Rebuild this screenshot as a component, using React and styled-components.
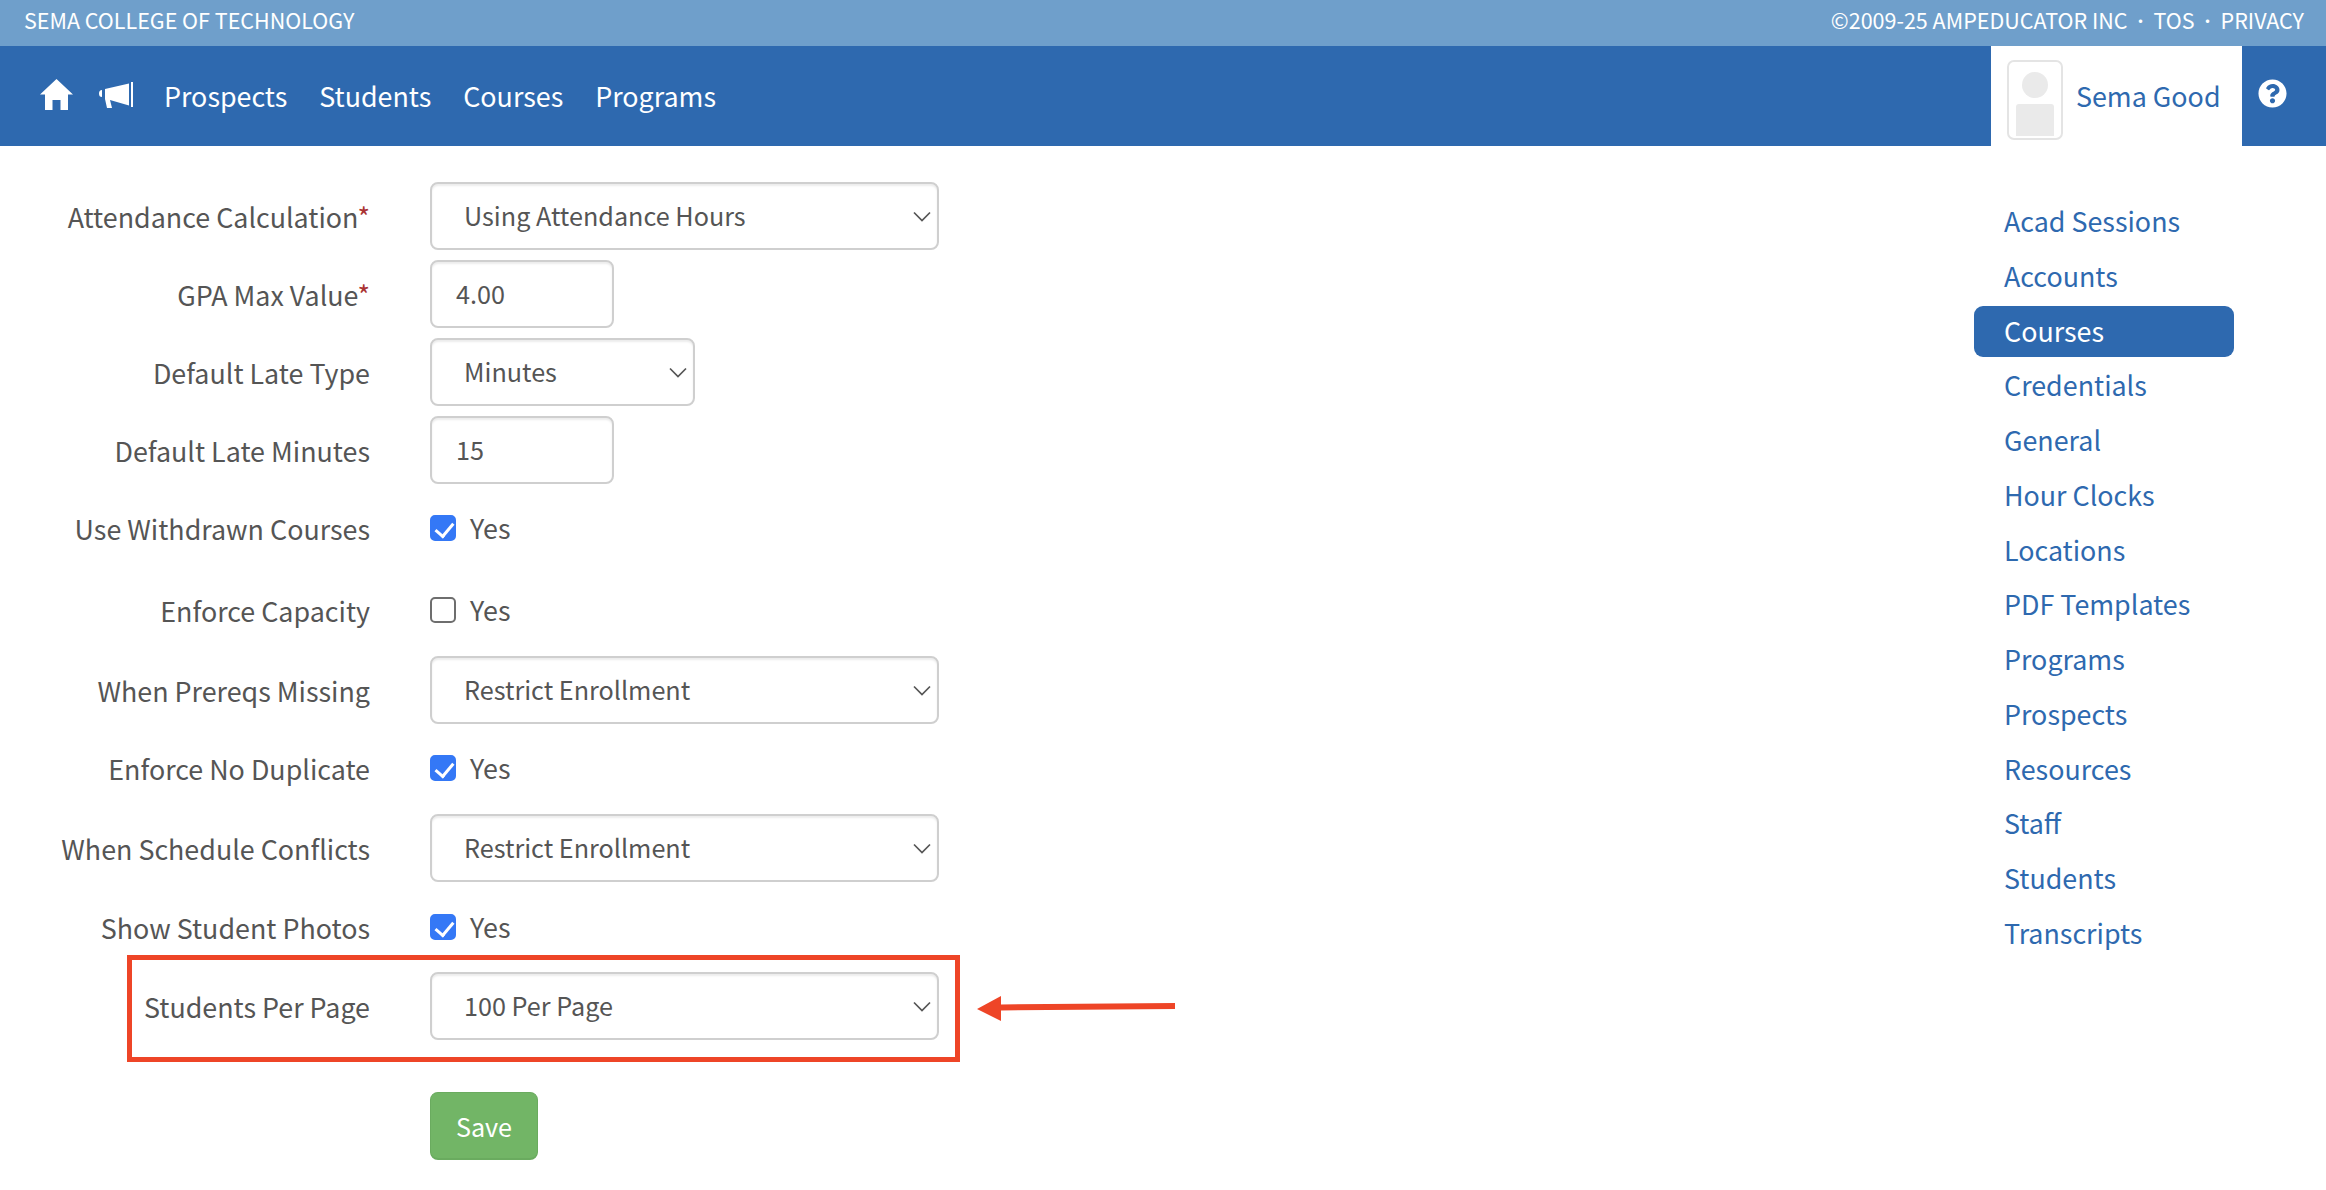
import React from "react";
import styled, { createGlobalStyle } from "styled-components";
import { FaQuestionCircle } from "react-icons/fa";

const SANS = `"Noto Sans CJK SC", "Open Sans", sans-serif`;

const Global = createGlobalStyle`
  html, body { margin: 0; padding: 0; background: #fff; }
  body { font-family: ${SANS}; color: #555; overflow: hidden; }
  * { box-sizing: border-box; }
`;

const Page = styled.div`
  position: relative;
  width: 2326px;
  height: 1190px;
  overflow: hidden;
`;

const TopBar = styled.header`
  height: 46px;
  background: #6f9fcb;
  color: #fff;
  font-size: 21.5px;
  line-height: 40px;
  padding: 0 22px 6px 24px;
  display: flex;
  justify-content: space-between;
`;

const TopRight = styled.div`
  display: flex;
  gap: 4px;
`;

const Dot = styled.span`
  font-size: 16px;
  padding: 0 1px;
`;

const NavBar = styled.nav`
  height: 100px;
  background: #2e69af;
  display: flex;
  align-items: center;
  color: #fff;
`;

const IconSvg = styled.svg`
  display: block;
  fill: #fff;
  margin-left: ${(p) => p.$ml}px;
  margin-top: -3px;
`;

const NavLinks = styled.div`
  display: flex;
  gap: 32px;
  margin-left: 31px;
  font-size: 26.85px;
  line-height: 40px;
`;

const Spacer = styled.div`
  flex: 1;
`;

const UserTab = styled.div`
  width: 251px;
  height: 100px;
  background: #fff;
  display: flex;
  align-items: center;
  padding-left: 16px;
  gap: 13px;
  color: #2e69af;
  font-size: 26.85px;
`;

const UserName = styled.span`
  padding-bottom: 2px;
`;

const Avatar = styled.div`
  width: 56px;
  height: 80px;
  border: 2px solid #e4e4e4;
  border-radius: 7px;
  display: flex;
  flex-direction: column;
  align-items: center;
  justify-content: flex-end;
  gap: 6px;
  padding: 0 6px 2px;
  margin-top: 8px;
`;

const AvatarHead = styled.div`
  width: 26px;
  height: 26px;
  border-radius: 50%;
  background: #eaeaea;
`;

const AvatarBody = styled.div`
  width: 38px;
  height: 32px;
  border-radius: 3px 3px 0 0;
  background: #eaeaea;
`;

const HelpSlot = styled.div`
  flex: 0 0 84px;
  display: flex;
  padding: 0 0 5px 16px;
  font-size: 29px;
`;

const Main = styled.main`
  display: flex;
  justify-content: space-between;
`;

const Form = styled.form`
  padding-top: 36px;
`;

const Row = styled.div`
  display: flex;
  align-items: center;
  height: ${(p) => p.$h}px;
  margin-top: ${(p) => p.$mt || 0}px;
`;

const Label = styled.label`
  width: 370px;
  padding-top: 1px;
  text-align: right;
  font-size: 26.85px;
  line-height: 40px;
  color: #555;
`;

const Req = styled.span`
  color: #a33;
`;

const Field = styled.div`
  position: relative;
  margin-left: 60px;
  display: flex;
  align-items: center;
`;

const Select = styled.select`
  appearance: none;
  width: ${(p) => p.$w}px;
  height: 68px;
  padding: 0 32px 2px;
  border: 2px solid #cfcfcf;
  border-radius: 8px;
  background: #fff;
  box-shadow: inset 0 2px 2px rgba(0, 0, 0, 0.08);
  font: 25.2px ${SANS};
  color: #555;
`;

const Chevron = styled.svg`
  position: absolute;
  right: 8px;
  top: 29px;
  width: 18px;
  height: 11px;
  fill: none;
  stroke: #555;
  stroke-width: 1.7;
  pointer-events: none;
`;

const TextInput = styled.input`
  width: 184px;
  height: 68px;
  padding: 0 24px 2px;
  border: 2px solid #cfcfcf;
  border-radius: 8px;
  box-shadow: inset 0 2px 2px rgba(0, 0, 0, 0.08);
  font: 25.2px ${SANS};
  color: #555;
`;

const Check = styled.input`
  appearance: none;
  position: relative;
  width: 26px;
  height: 26px;
  margin: 0;
  border: 2px solid #6e6e6e;
  border-radius: 5px;
  background: #fff;

  &:checked {
    background: #3478f6;
    border-color: #3478f6;
  }

  &:checked::after {
    content: "";
    position: absolute;
    left: 6.5px;
    top: 1.5px;
    width: 8px;
    height: 15px;
    border: solid #fff;
    border-width: 0 3.5px 3.5px 0;
    transform: rotate(40deg);
  }
`;

const YesText = styled.span`
  margin-left: 14px;
  font-size: 26.85px;
  line-height: 40px;
`;

const SaveButton = styled.button`
  width: 108px;
  height: 68px;
  margin: 52px 0 0 430px;
  display: block;
  background: #72b566;
  border: 1px solid #6aab5f;
  border-bottom-width: 2px;
  border-radius: 8px;
  color: #fff;
  font: 25.2px ${SANS};
`;

const SideNav = styled.aside`
  width: 260px;
  margin: 50px 92px 0 0;
  display: flex;
  flex-direction: column;
`;

const SideLink = styled.a`
  display: block;
  height: 51px;
  margin-bottom: 3.75px;
  padding-left: 30px;
  border-radius: 9px;
  font-size: 26.85px;
  line-height: 49px;
  color: ${(p) => (p.$active ? "#fff" : "#2e69af")};
  background: ${(p) => (p.$active ? "#2e69af" : "transparent")};
`;

const Highlight = styled.div`
  position: absolute;
  left: 127px;
  top: 955px;
  width: 833px;
  height: 107px;
  border: 5px solid #ee4527;
  pointer-events: none;
`;

const Arrow = styled.svg`
  position: absolute;
  left: 970px;
  top: 990px;
  width: 210px;
  height: 36px;
  fill: #ee4527;
`;

const Caret = () => (
  <Chevron viewBox="0 0 18 11">
    <path d="M1 1.5 L9 9.5 L17 1.5" />
  </Chevron>
);

const HomeIcon = () => (
  <IconSvg $ml={40} width="33" height="31" viewBox="0 0 33 31">
    <path d="M16.5 0 L33 15.5 L28 15.5 L28 31 L20.5 31 L20.5 21 L12.5 21 L12.5 31 L5 31 L5 15.5 L0 15.5 Z" />
  </IconSvg>
);

const HornIcon = () => (
  <IconSvg $ml={26} width="34" height="26" viewBox="0 0 34 26">
    <path d="M32 0 L34 0 L34 25 L32 25 Z" />
    <path d="M30 1.5 L30 23.5 L11 18 L13 26 L8 26 L6 17 L6 7 Z" />
    <path d="M3 8 L3 15 A3 3.5 0 0 1 3 8 Z" />
  </IconSvg>
);

const sideItems = [
  "Acad Sessions", "Accounts", "Courses", "Credentials", "General", "Hour Clocks", "Locations",
  "PDF Templates", "Programs", "Prospects", "Resources", "Staff", "Students", "Transcripts",
];

const SelectRow = ({ label, req, value, w, mt }) => (
  <Row $h={68} $mt={mt}>
    <Label>{label}{req && <Req>*</Req>}</Label>
    <Field>
      <Select $w={w} defaultValue={value}><option>{value}</option></Select>
      <Caret />
    </Field>
  </Row>
);

const InputRow = ({ label, req, value, mt }) => (
  <Row $h={68} $mt={mt}>
    <Label>{label}{req && <Req>*</Req>}</Label>
    <Field><TextInput defaultValue={value} /></Field>
  </Row>
);

const CheckRow = ({ label, checked, mt }) => (
  <Row $h={72} $mt={mt}>
    <Label>{label}</Label>
    <Field>
      <Check type="checkbox" defaultChecked={checked} />
      <YesText>Yes</YesText>
    </Field>
  </Row>
);

export default function App() {
  return (
    <Page>
      <Global />
      <TopBar>
        <span>SEMA COLLEGE OF TECHNOLOGY</span>
        <TopRight>
          <span>©2009-25 AMPEDUCATOR INC</span>
          <Dot>·</Dot>
          <span>TOS</span>
          <Dot>·</Dot>
          <span>PRIVACY</span>
        </TopRight>
      </TopBar>
      <NavBar>
        <HomeIcon />
        <HornIcon />
        <NavLinks>
          <span>Prospects</span>
          <span>Students</span>
          <span>Courses</span>
          <span>Programs</span>
        </NavLinks>
        <Spacer />
        <UserTab>
          <Avatar><AvatarHead /><AvatarBody /></Avatar>
          <UserName>Sema Good</UserName>
        </UserTab>
        <HelpSlot><FaQuestionCircle /></HelpSlot>
      </NavBar>
      <Main>
        <Form>
          <SelectRow label="Attendance Calculation" req value="Using Attendance Hours" w={509} />
          <InputRow label="GPA Max Value" req value="4.00" mt={10} />
          <SelectRow label="Default Late Type" value="Minutes" w={265} mt={10} />
          <InputRow label="Default Late Minutes" value="15" mt={10} />
          <CheckRow label="Use Withdrawn Courses" checked mt={8} />
          <CheckRow label="Enforce Capacity" mt={10} />
          <SelectRow label="When Prereqs Missing" value="Restrict Enrollment" w={509} mt={10} />
          <CheckRow label="Enforce No Duplicate" checked mt={8} />
          <SelectRow label="When Schedule Conflicts" value="Restrict Enrollment" w={509} mt={10} />
          <CheckRow label="Show Student Photos" checked mt={9} />
          <SelectRow label="Students Per Page" value="100 Per Page" w={509} mt={9} />
          <SaveButton type="button">Save</SaveButton>
        </Form>
        <SideNav>
          {sideItems.map((s) => (
            <SideLink key={s} $active={s === "Courses"}>{s}</SideLink>
          ))}
        </SideNav>
      </Main>
      <Highlight />
      <Arrow viewBox="0 0 210 36">
        <path d="M7 19 L31 6 L31 14.5 L205 13 L205 19 L31 20.5 L31 31 Z" />
      </Arrow>
    </Page>
  );
}
